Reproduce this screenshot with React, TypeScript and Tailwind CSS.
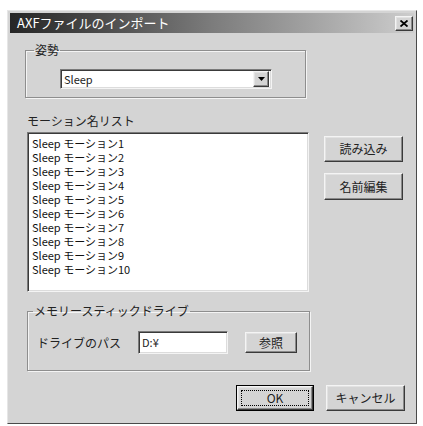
const ui = { fontFamily: '"Noto Sans CJK JP", "Liberation Sans", sans-serif' };

const raised =
  'bg-[#d4d4d4] border border-t-[#f4f4f4] border-l-[#f4f4f4] border-r-[#3a3a3a] border-b-[#3a3a3a] shadow-[inset_-1px_-1px_0_#8a8a8a,inset_1px_1px_0_#e2e2e2]';
const sunken =
  'bg-white border border-t-[#7a7a7a] border-l-[#7a7a7a] border-r-[#f4f4f4] border-b-[#f4f4f4] shadow-[inset_1px_1px_0_#3a3a3a,inset_-1px_-1px_0_#dcdcdc]';
const group =
  'border border-[#8e8e8e] shadow-[1px_1px_0_#f4f4f4,inset_1px_1px_0_#f4f4f4] px-0';

const motions = Array.from({ length: 10 }, (_, i) => `Sleep モーション${i + 1}`);

function Button({ label, className = '' }: { label: string; className?: string }) {
  return (
    <div className={`${raised} flex items-center justify-center text-[12px] text-[#222] ${className}`}>
      {label}
    </div>
  );
}

export default function App() {
  return (
    <div className="w-[423px] h-[426px] bg-white pt-[10px] pl-[7px]" style={ui}>
      <div className="w-[410px] h-[414px] bg-[#d4d4d4] border border-t-[#e6e6e6] border-l-[#e6e6e6] border-r-[#4a4a4a] border-b-[#4a4a4a] p-[2px] flex flex-col">
        {/* title bar */}
        <div className="h-[20px] shrink-0 bg-gradient-to-r from-[#262626] via-[#7c7c7c] to-[#cdcdcd] flex items-center justify-between pl-[7px] pr-[1px]">
          <span className="text-white text-[13px] leading-[20px]">AXFファイルのインポート</span>
          <div className={`${raised} w-[18px] h-[15px] flex items-center justify-center`}>
            <svg width="8" height="7" viewBox="0 0 8 7">
              <path d="M0.5 0.5 L7.5 6.5 M7.5 0.5 L0.5 6.5" stroke="#000" strokeWidth="1.8" />
            </svg>
          </div>
        </div>

        <div className="flex pl-[15px] mt-[10px]">
          {/* left column */}
          <div className="w-[284px] flex flex-col">
            <fieldset className={`${group} w-[281px] pb-[8px]`}>
              <legend className="ml-[8px] px-[1px] text-[12px] leading-[14px] text-[#222]">姿勢</legend>
              <div className={`${sunken} ml-[34px] mt-[12px] w-[212px] h-[20px] flex items-center justify-between pl-[3px] pr-[2px]`}>
                <span className="text-[11px] text-[#222] leading-none">Sleep</span>
                <div className={`${raised} w-[16px] h-[16px] flex items-center justify-center`}>
                  <svg width="7" height="4" viewBox="0 0 7 4">
                    <path d="M0 0 H7 L3.5 4 Z" fill="#000" />
                  </svg>
                </div>
              </div>
            </fieldset>

            <div className="ml-[2px] mt-[16px] text-[12px] leading-[14px] text-[#222]">モーション名リスト</div>
            <div className={`${sunken} ml-[2px] mt-[4px] w-[282px] h-[160px] pt-[3px] pl-[4px]`}>
              {motions.map(m => (
                <div key={m} className="text-[11px] leading-[14px] text-[#111] whitespace-nowrap">
                  {m}
                </div>
              ))}
            </div>

            <fieldset className={`${group} ml-[2px] mt-[12px] w-[283px] pb-[16px]`}>
              <legend className="ml-[5px] px-[1px] text-[12px] leading-[14px] text-[#222]">メモリースティックドライブ</legend>
              <div className="flex items-center mt-[13px] pl-[9px]">
                <span className="w-[101px] text-[12px] text-[#222]">ドライブのパス</span>
                <div className={`${sunken} w-[90px] h-[23px] flex items-center pl-[3px] text-[11px] text-[#222]`}>D:¥</div>
                <Button label="参照" className="ml-[17px] w-[52px] h-[21px]" />
              </div>
            </fieldset>
          </div>

          {/* right column */}
          <div className="ml-[15px] mt-[93px] flex flex-col gap-[11px]">
            <Button label="読み込み" className="w-[79px] h-[26px]" />
            <Button label="名前編集" className="w-[79px] h-[27px]" />
          </div>
        </div>

        {/* bottom buttons */}
        <div className="flex justify-end gap-[12px] pr-[9px] mt-[14px]">
          <div className="w-[78px] h-[26px] border border-black">
            <div className={`${raised} w-full h-full p-[3px]`}>
              <div className="w-full h-full border border-dotted border-black flex items-center justify-center text-[12px] text-[#222]">
                OK
              </div>
            </div>
          </div>
          <Button label="キャンセル" className="w-[79px] h-[26px]" />
        </div>
      </div>
    </div>
  );
}
